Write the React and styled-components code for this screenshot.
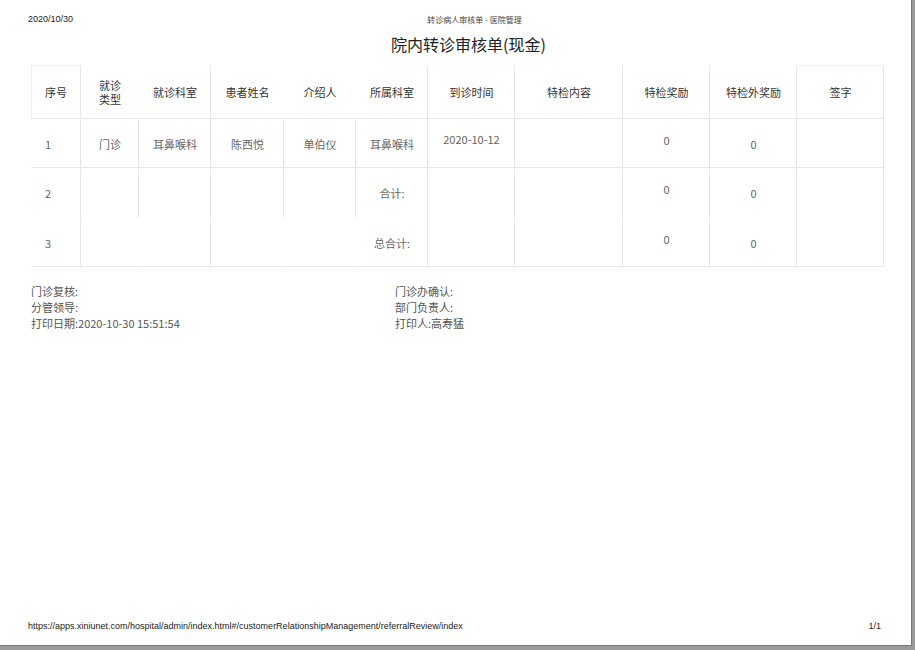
import React from "react";
import styled, { createGlobalStyle } from "styled-components";

const Global = createGlobalStyle`
  html, body { margin: 0; padding: 0; background: #9a9a9a; }
  body { font-family: "Noto Sans CJK SC", "Liberation Sans", sans-serif; }
`;

const Page = styled.div`
  width: 912px;
  height: 646px;
  background: #fff;
  border-right: 1px solid #7a7a7a;
  border-bottom: 1px solid #7a7a7a;
  box-sizing: border-box;
  display: flex;
  flex-direction: column;
  padding: 0 30px 0 28px;
`;

const TopBar = styled.div`
  display: grid;
  grid-template-columns: 1fr auto 1fr;
  align-items: center;
  height: 14px;
  margin-top: 12px;
  font-size: 9px;
  color: #222;
`;

const DateText = styled.span`
  font-family: "Liberation Sans", sans-serif;
`;

const PageTitle = styled.span`
  font-family: "Noto Sans CJK SC", serif;
  font-size: 8px;
  color: #444;
  margin-left: 40px;
`;

const Title = styled.h1`
  margin: 4px 0 0;
  text-align: center;
  font-size: 16px;
  font-weight: 400;
  color: #222;
  line-height: 28px;
  padding-left: 28px;
`;

const Grid = styled.div`
  margin: 7px 0 0 3px;
  display: grid;
  grid-template-columns: 50px 58px 72px 73px 72px 72px 87px 108px 87px 87px 87px;
  grid-template-rows: 54px 49px 50px 49px;
  width: 853px;
`;

const Cell = styled.div`
  box-sizing: border-box;
  display: flex;
  justify-content: ${(p) => (p.$left ? "flex-start" : "center")};
  align-items: ${(p) => (p.$top ? "flex-start" : "center")};
  padding: ${(p) => (p.$top ? `${p.$top}px 4px 0` : "0 4px")};
  padding-left: ${(p) => (p.$left ? "13px" : "4px")};
  text-align: center;
  font-size: 11px;
  line-height: 14px;
  color: ${(p) => (p.$head ? "#333" : "#666")};
  border-right: 1px solid ${(p) => (p.$noR ? "transparent" : "#e6e6e6")};
  border-bottom: 1px solid ${(p) => (p.$noB ? "transparent" : "#e6e6e6")};
  border-top: 1px solid ${(p) => (p.$topLine ? "#f0f0f0" : "transparent")};
  border-left: 1px solid ${(p) => (p.$leftLine ? "#f0f0f0" : "transparent")};
`;

const Footer = styled.div`
  display: grid;
  grid-template-columns: 364px 1fr;
  margin: 16px 0 0 3px;
  font-size: 11px;
  line-height: 16px;
  color: #555;
`;

const Spacer = styled.div`
  flex: 1;
`;

const BottomBar = styled.div`
  display: flex;
  justify-content: space-between;
  font-family: "Liberation Sans", sans-serif;
  font-size: 9px;
  color: #222;
  margin-bottom: 14px;
`;

export default function App() {
  const head = [
    ["序号", { $leftLine: true, $topLine: true }],
    ["就诊类型", { $noR: true }],
    ["就诊科室", {}],
    ["患者姓名", { $noR: true }],
    ["介绍人", { $noR: true }],
    ["所属科室", {}],
    ["到诊时间", {}],
    ["特检内容", {}],
    ["特检奖励", {}],
    ["特检外奖励", {}],
    ["签字", { $topLine: true }],
  ];
  return (
    <>
      <Global />
      <Page>
        <TopBar>
          <DateText>2020/10/30</DateText>
          <PageTitle>转诊病人审核单 - 医院管理</PageTitle>
          <span />
        </TopBar>
        <Title>院内转诊审核单(现金)</Title>
        <Grid>
          {head.map(([t, p], i) => (
            <Cell key={"h" + i} $head {...p} $left={i === 0}>
              {i === 1 ? <span style={{ width: 26 }}>{t}</span> : t}
            </Cell>
          ))}

          <Cell $left>1</Cell>
          <Cell>门诊</Cell>
          <Cell>耳鼻喉科</Cell>
          <Cell>陈西悦</Cell>
          <Cell>单伯仪</Cell>
          <Cell>耳鼻喉科</Cell>
          <Cell $top={12}>2020-10-12</Cell>
          <Cell />
          <Cell $top={13}>0</Cell>
          <Cell>0</Cell>
          <Cell />

          <Cell $left $noB>2</Cell>
          <Cell $noB />
          <Cell $noB />
          <Cell $noB />
          <Cell $noB />
          <Cell $noB>合计:</Cell>
          <Cell $noB />
          <Cell $noB />
          <Cell $noB $top={13}>0</Cell>
          <Cell $noB>0</Cell>
          <Cell $noB />

          <Cell $left>3</Cell>
          <Cell $noR />
          <Cell />
          <Cell $noR />
          <Cell $noR />
          <Cell>总合计:</Cell>
          <Cell />
          <Cell />
          <Cell $top={13}>0</Cell>
          <Cell>0</Cell>
          <Cell />
        </Grid>
        <Footer>
          <span>门诊复核:</span>
          <span>门诊办确认:</span>
          <span>分管领导:</span>
          <span>部门负责人:</span>
          <span>打印日期:2020-10-30 15:51:54</span>
          <span>打印人:高寿猛</span>
        </Footer>
        <Spacer />
        <BottomBar>
          <span>https://apps.xiniunet.com/hospital/admin/index.html#/customerRelationshipManagement/referralReview/index</span>
          <span>1/1</span>
        </BottomBar>
      </Page>
    </>
  );
}
